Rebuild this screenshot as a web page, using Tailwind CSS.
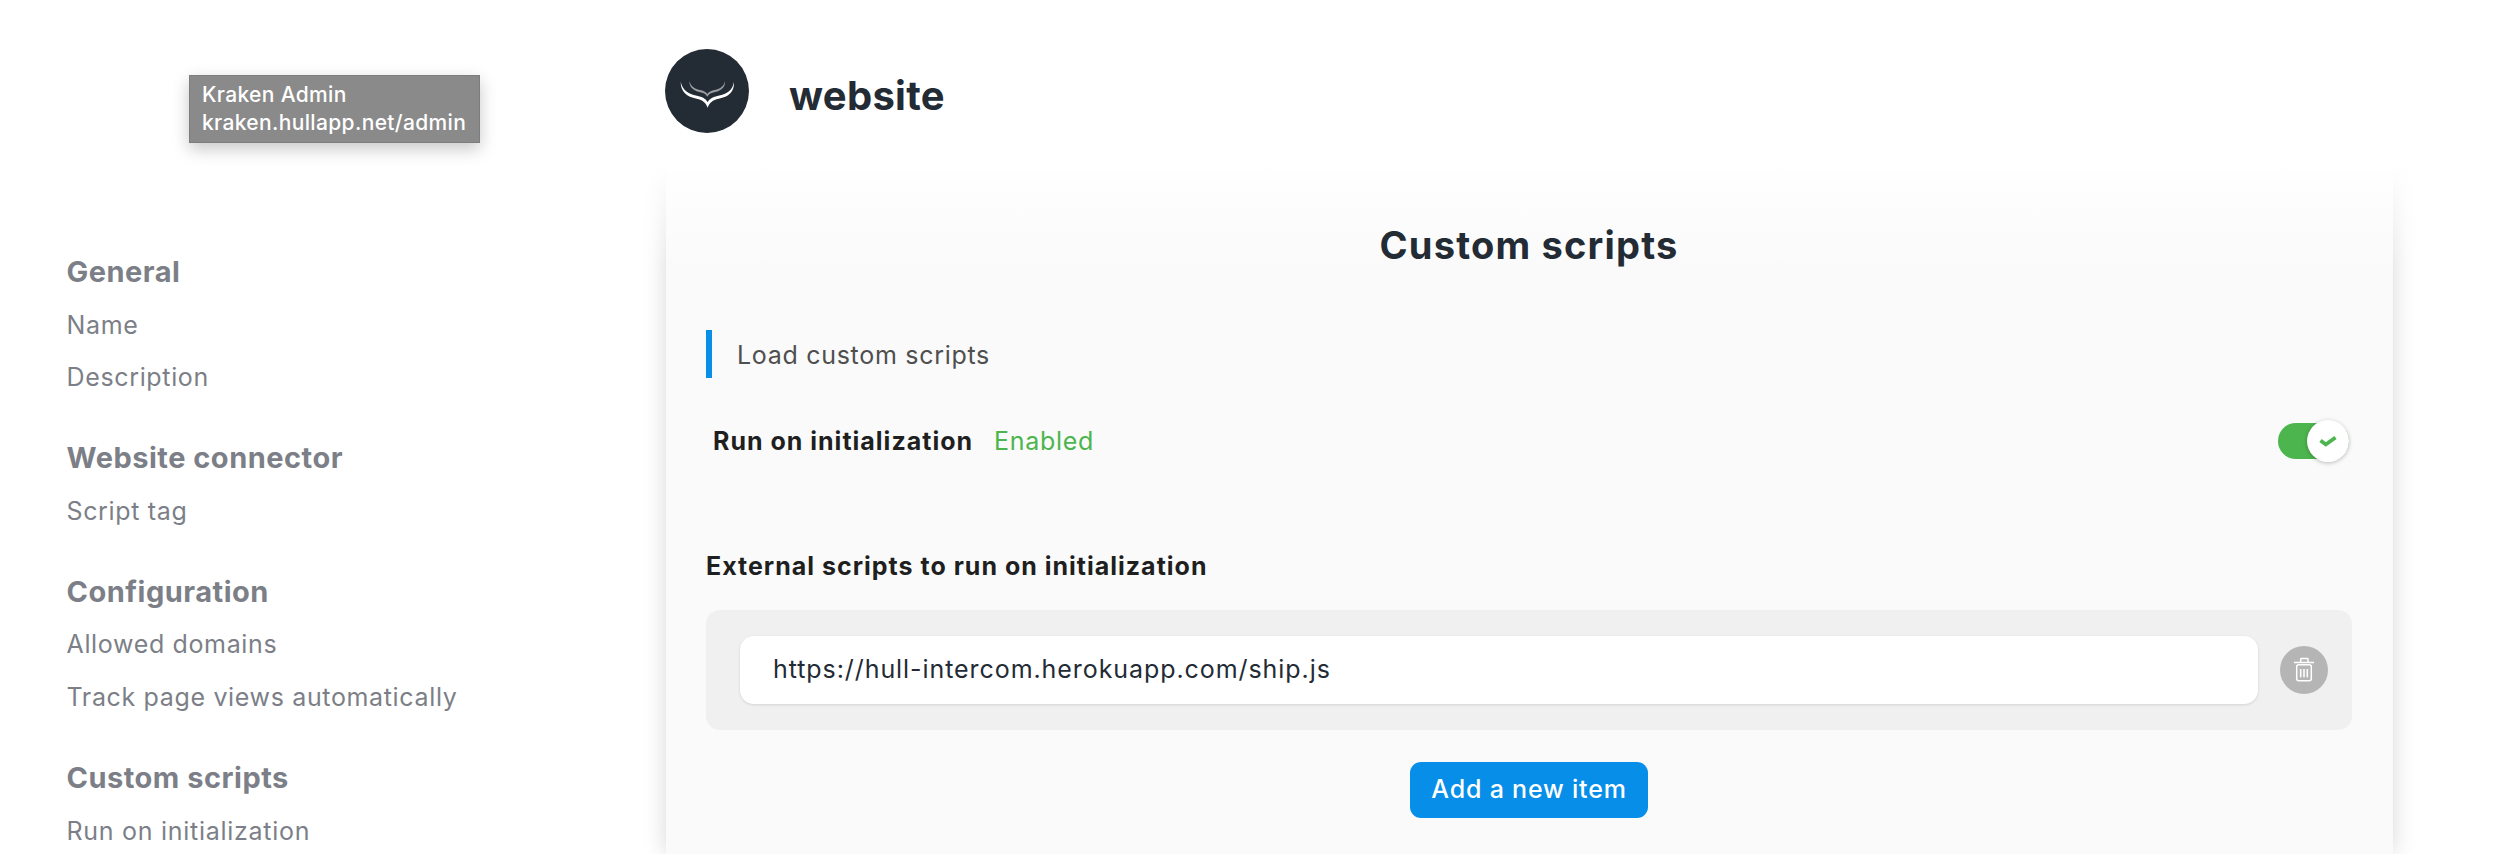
<!DOCTYPE html>
<html lang="en">
<head>
  <meta charset="UTF-8">
  <title>website - Custom scripts</title>
  <script src="https://cdn.jsdelivr.net/npm/@tailwindcss/browser@4"></script>
</head>
<body class="bg-white font-['Inter',sans-serif] text-[#232b35]">
  <div class="relative flex h-[854px] w-[2518px] overflow-hidden">
    <!-- Tooltip -->
    <div class="absolute left-[189px] top-[75px] z-20 h-[68px] w-[291px] border border-[#7d7d7d] bg-[#8a8a8a] pl-[12px] pt-[5px] text-[21px] font-medium leading-[28px] tracking-[0.35px] text-white shadow-[0_6px_16px_rgba(0,0,0,0.22)]">
      <div>Kraken Admin</div>
      <div>kraken.hullapp.net/admin</div>
    </div>

    <!-- Sidebar -->
    <aside class="w-[666px] shrink-0 pl-[66.5px] pt-[246px] tracking-[0.65px] text-[#7c7f87]">
      <div class="flex flex-col gap-[28.5px]">
        <div>
          <div class="h-[52.5px] text-[29px] font-bold leading-[52px] tracking-[0.5px]">General</div>
          <div class="h-[52.5px] text-[25px] leading-[53px]">Name</div>
          <div class="h-[52.5px] text-[25px] leading-[52px]">Description</div>
        </div>
        <div>
          <div class="h-[52.5px] text-[29px] font-bold leading-[52px] tracking-[0.5px]">Website connector</div>
          <div class="h-[52.5px] text-[25px] leading-[53px]">Script tag</div>
        </div>
        <div>
          <div class="h-[52.5px] text-[29px] font-bold leading-[52px] tracking-[0.5px]">Configuration</div>
          <div class="h-[52.5px] text-[25px] leading-[52px]">Allowed domains</div>
          <div class="h-[52.5px] text-[25px] leading-[52px]">Track page views automatically</div>
        </div>
        <div>
          <div class="h-[52.5px] text-[29px] font-bold leading-[52px] tracking-[0.5px]">Custom scripts</div>
          <div class="h-[52.5px] text-[25px] leading-[54px] tracking-[0.72px]">Run on initialization</div>
        </div>
      </div>
    </aside>

    <!-- Main -->
    <main class="w-[1727px] shrink-0">
      <header class="flex h-[165px] items-start pt-[49px]">
        <svg class="-ml-[1px] h-[84px] w-[84px] shrink-0" viewBox="75 57 252 252">
          <circle cx="201" cy="183" r="126" fill="#232b35"/>
          <path fill="#fff" d="M122 155C122 185 140 200 170 206C188 210 198 218 203 233C208 218 218 210 236 206C266 200 284 185 282 155C278 180 262 192 235 197C220 200 208 206 203 216C198 206 186 200 171 197C144 192 128 180 122 155Z"/>
          <path fill="#9a9da2" d="M148 153C148 172 160 182 178 186C190 188 198 192 202 200C206 192 214 188 226 186C244 182 256 172 255 153C252 168 242 176 224 180C214 182 206 186 202 192C198 186 190 182 180 180C162 176 152 168 148 153Z"/>
        </svg>
        <h1 class="ml-[40px] mt-[19px] text-[40px] font-bold leading-[56px] tracking-[0.3px]">website</h1>
      </header>

      <section class="relative h-[689px] bg-[#fafafa] pl-[40px] pr-[41px] shadow-[0_0_22px_rgba(0,0,0,0.16)]">
        <!-- white fade over the top of the card and its shadow -->
        <div class="pointer-events-none absolute -left-[40px] -right-[40px] -top-[30px] h-[135px] bg-gradient-to-b from-white from-[20%] to-white/0"></div>

        <h2 class="relative pt-[56px] text-center text-[38px] font-bold leading-[48px] tracking-[1.2px]">Custom scripts</h2>

        <div class="mt-[61px] flex h-[48px] items-center border-l-[6px] border-[#068ee9] pl-[25px] pt-[3px] text-[25px] tracking-[0.7px] text-[#4f4f4f]">Load custom scripts</div>

        <div class="mt-[40px] flex h-[46px] items-center pl-[7px] pr-[3px]">
          <span class="pt-[1px] text-[25px] font-bold tracking-[1px] text-[#1f1f1f]">Run on initialization</span>
          <span class="ml-[21px] pt-[1px] text-[25px] tracking-[0.7px] text-[#4cb54d]">Enabled</span>
          <div class="relative ml-auto h-[36px] w-[71px] rounded-full bg-[#4cb54d]">
            <div class="absolute right-0 top-[-3px] flex h-[42px] w-[42px] items-center justify-center rounded-full bg-white shadow-[0_1px_4px_rgba(0,0,0,0.25)]">
              <svg class="h-[12px] w-[18px]" viewBox="0 0 18 12"><path d="M1.5 5.5L6.8 9.5L16.5 2.5" fill="none" stroke="#4cb54d" stroke-width="3.8"/></svg>
            </div>
          </div>
        </div>

        <h3 class="mt-[84px] text-[25px] font-bold leading-[36px] tracking-[1px] text-[#1f1f1f]">External scripts to run on initialization</h3>

        <div class="mt-[26px] flex h-[120px] items-center rounded-[14px] bg-[#f0f0f0] pl-[34px] pr-[24px]">
          <div class="flex h-[68px] flex-1 items-center rounded-[14px] bg-white pl-[33px] text-[25px] tracking-[0.93px] shadow-[0_1px_3px_rgba(0,0,0,0.12)]">https://hull-intercom.herokuapp.com/ship.js</div>
          <div class="ml-[22px] h-[48px] w-[48px] shrink-0 rounded-full bg-[#b5b5b5]">
            <svg class="h-[48px] w-[48px]" viewBox="0 0 48 48" fill="none" stroke="#fff">
              <path stroke-width="1.5" d="M14 16.5H34M20.7 16.5V13.2Q20.7 12.5 21.5 12.5H27.2Q28 12.5 28 13.2V16.5"/>
              <rect x="16.7" y="18.7" width="14.6" height="16" rx="2" stroke-width="1.5"/>
              <path stroke-width="1.6" d="M20.7 23V31.3M24 23V31.3M27.3 23V31.3"/>
            </svg>
          </div>
        </div>

        <div class="mt-[32px] flex justify-center">
          <button class="h-[56px] w-[238px] rounded-[11px] bg-[#068ee9] text-[25px] font-medium tracking-[0.8px] text-white">Add a new item</button>
        </div>
      </section>
    </main>
  </div>
</body>
</html>
